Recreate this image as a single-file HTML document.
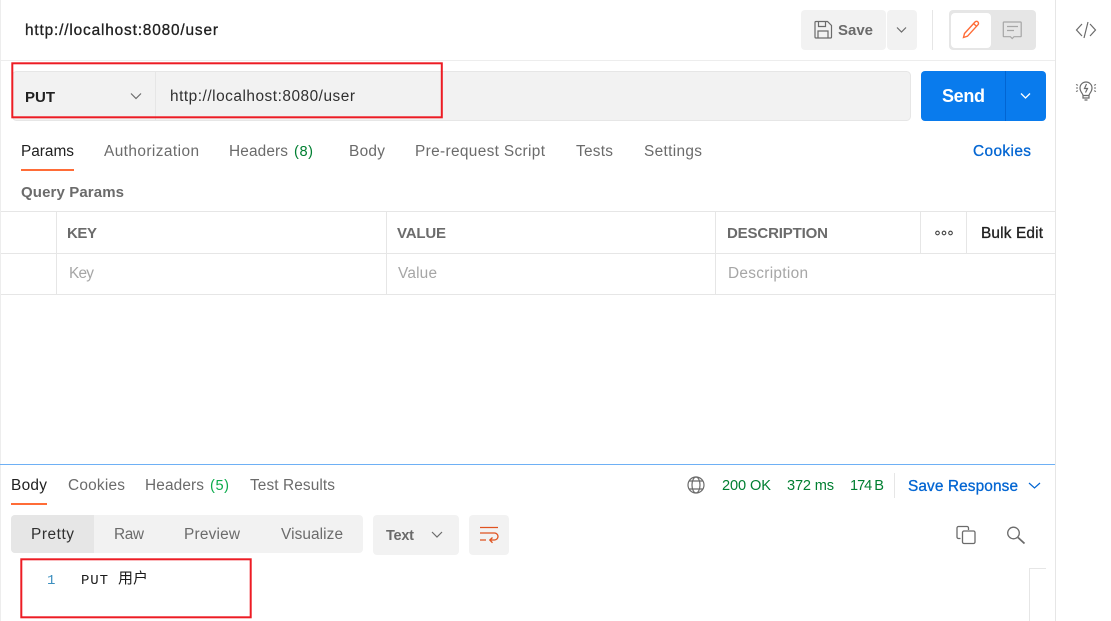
<!DOCTYPE html>
<html lang="en"><head><meta charset="utf-8"><title>Request</title>
<style>
html,body{margin:0;padding:0;background:#fff;width:1111px;height:621px;overflow:hidden}
svg{display:block}
text{font-family:"Liberation Sans","Noto Sans CJK SC",sans-serif;font-size:15.4px;fill:#6b6b6b}
.d{fill:#212121}
.m{stroke:currentColor;stroke-width:.3}
.g{fill:#007f31;font-size:14.6px}
.b{font-weight:bold;font-size:15px}
.p{fill:#a6a6a6}
.ic{fill:none;stroke:#6b6b6b;stroke-width:1.2}
</style></head><body>
<svg width="1111" height="621" viewBox="0 0 1111 621" xmlns="http://www.w3.org/2000/svg">
<rect width="1111" height="621" fill="#fff"/>
<rect x="0" y="0" width="1" height="621" fill="#ededed"/>
<rect x="1055" y="0" width="1" height="621" fill="#e6e6e6"/>
<rect x="0" y="60" width="1055" height="1" fill="#ededed"/>

<text x="25" y="35" textLength="193" class="d m" style="color:#212121">http://localhost:8080/user</text>

<rect x="801" y="10" width="85" height="40" rx="4" fill="#f2f2f2"/>
<rect x="887" y="10" width="30" height="40" rx="4" fill="#f2f2f2"/>
<path d="M815 22.500a1 1 0 0 1 1-1h11.500l4 4v11.500a1 1 0 0 1-1 1h-14.500a1 1 0 0 1-1-1zM818.500 21.500v5h7v-5M818 37.500v-6.500h10v6.500" class="ic"/>
<text x="838" y="35" textLength="35" class="b">Save</text>
<path d="M897 27.500l4.500 4.500 4.500-4.500" class="ic"/>
<rect x="932" y="10" width="1" height="40" fill="#e6e6e6"/>
<rect x="949" y="10" width="87" height="40" rx="4" fill="#e6e6e6"/>
<rect x="951" y="13" width="40" height="35" rx="4" fill="#fff"/>
<path d="M963.500 37.500l1-4 10.500-11.500a1.800 1.800 0 0 1 3 2.700l-10.500 11.500zM973.500 23.500l3 2.800" fill="none" stroke="#ff6c37" stroke-width="1.400"/>
<path d="M1004 22h16.500a.7.700 0 0 1 .7.700v13.300a.7.700 0 0 1-.7.700h-6.500l-1.800 1.800-1.800-1.800h-6.400a.7.700 0 0 1-.7-.7v-13.300a.7.700 0 0 1 .7-.7zM1007 26.500h11M1007 30.500h7" fill="none" stroke="#a6a6a6" stroke-width="1.200"/>

<rect x="12.500" y="71.500" width="898" height="49" rx="4" fill="#f2f2f2" stroke="#e6e6e6"/>
<rect x="155" y="72" width="1" height="48" fill="#e6e6e6"/>
<text x="25" y="102" textLength="30" class="d b">PUT</text>
<path d="M131 93.500l5 5 5-5" class="ic"/>
<text x="170" y="101" textLength="185" class="d" style="fill:#303030">http://localhost:8080/user</text>
<rect x="921" y="71" width="125" height="50" rx="4" fill="#097bed"/>
<rect x="1005" y="71" width="1" height="50" fill="#0265d2"/>
<text x="942" y="102" textLength="43" class="b" style="fill:#fff;font-size:18px">Send</text>
<path d="M1021 93.500l4.500 4.500 4.500-4.500" fill="none" stroke="#fff" stroke-width="1.300"/>

<text x="21" y="156" textLength="53" class="d">Params</text>
<rect x="21" y="169" width="53" height="2" fill="#ff6c37"/>
<text x="104" y="156" textLength="95">Authorization</text>
<text x="229" y="156" textLength="59">Headers</text>
<text x="294" y="156" textLength="19" class="g">(8)</text>
<text x="349" y="156" textLength="36">Body</text>
<text x="415" y="156" textLength="130">Pre-request Script</text>
<text x="576" y="156" textLength="37">Tests</text>
<text x="644" y="156" textLength="58">Settings</text>
<text x="973" y="156" textLength="58" class="m" style="fill:#0265d2;color:#0265d2">Cookies</text>
<text x="21" y="197" textLength="103" class="b">Query Params</text>

<rect x="1" y="211" width="1054" height="1" fill="#e6e6e6"/>
<rect x="1" y="253" width="1054" height="1" fill="#e6e6e6"/>
<rect x="1" y="294" width="1054" height="1" fill="#e6e6e6"/>
<rect x="56" y="212" width="1" height="82" fill="#e6e6e6"/>
<rect x="386" y="212" width="1" height="82" fill="#e6e6e6"/>
<rect x="715" y="212" width="1" height="82" fill="#e6e6e6"/>
<rect x="920" y="212" width="1" height="41" fill="#e6e6e6"/>
<rect x="966" y="212" width="1" height="41" fill="#e6e6e6"/>
<text x="67" y="238" textLength="30" class="b">KEY</text>
<text x="397" y="238" textLength="49" class="b">VALUE</text>
<text x="727" y="238" textLength="101" class="b">DESCRIPTION</text>
<g fill="none" stroke="#404040" stroke-width="1.100"><circle cx="937.500" cy="233" r="1.800"/><circle cx="944" cy="233" r="1.800"/><circle cx="950.500" cy="233" r="1.800"/></g>
<text x="981" y="238" textLength="62" class="d m" style="color:#212121">Bulk Edit</text>
<text x="69" y="278" textLength="25" class="p">Key</text>
<text x="398" y="278" textLength="39" class="p">Value</text>
<text x="728" y="278" textLength="80" class="p">Description</text>

<rect x="0" y="464" width="1055" height="1" fill="#6eb0f5"/>
<text x="11" y="490" textLength="36" class="d">Body</text>
<rect x="11" y="503" width="36" height="2" fill="#ff6c37"/>
<text x="68" y="490" textLength="57">Cookies</text>
<text x="145" y="490" textLength="59">Headers</text>
<text x="210" y="490" textLength="19" class="g" style="fill:#0cab4c">(5)</text>
<text x="250" y="490" textLength="85">Test Results</text>

<g fill="none" stroke="#6b6b6b" stroke-width="1.200"><circle cx="696" cy="485" r="8"/><ellipse cx="696" cy="485" rx="4" ry="8"/><path d="M689 481h14M689 489h14"/></g>
<text x="722" y="490" textLength="49" class="g">200 OK</text>
<text x="787" y="490" textLength="47" class="g">372 ms</text>
<text x="850" y="490" textLength="34" class="g">174 B</text>
<rect x="894" y="473" width="1" height="25" fill="#e6e6e6"/>
<text x="908" y="491" textLength="110" class="m" style="fill:#0265d2;color:#0265d2">Save Response</text>
<path d="M1029 483l5.500 5 5.500-5" fill="none" stroke="#0265d2" stroke-width="1.200"/>

<rect x="11" y="515" width="352" height="38" rx="4" fill="#f2f2f2"/>
<path d="M15 515h79v38h-79a4 4 0 0 1-4-4v-30a4 4 0 0 1 4-4z" fill="#e6e6e6"/>
<text x="31" y="539" textLength="43" class="d" style="fill:#303030">Pretty</text>
<text x="114" y="539" textLength="30">Raw</text>
<text x="184" y="539" textLength="56">Preview</text>
<text x="281" y="539" textLength="62">Visualize</text>
<rect x="373" y="515" width="86" height="40" rx="4" fill="#f2f2f2"/>
<text x="386" y="540" textLength="28" class="b" style="font-size:14.5px">Text</text>
<path d="M432 532l5 5 5-5" class="ic"/>
<rect x="469" y="515" width="40" height="40" rx="4" fill="#f2f2f2"/>
<path d="M480 527.500h18M480 533h14.500a3.300 3.300 0 0 1 0 7h-4.500M492.500 537.500l-2.700 2.500 2.700 2.800M480 540h6" fill="none" stroke="#e05320" stroke-width="1.300"/>

<path d="M960.500 538.500h-2a1.500 1.500 0 0 1-1.500-1.500v-9a1.500 1.500 0 0 1 1.500-1.500h8.500a1.500 1.500 0 0 1 1.500 1.500v2" fill="none" stroke="#6b6b6b" stroke-width="1.300"/>
<rect x="962.500" y="531" width="12.500" height="12.500" rx="1.500" fill="none" stroke="#6b6b6b" stroke-width="1.300"/>
<circle cx="1013.500" cy="533" r="5.800" fill="none" stroke="#6b6b6b" stroke-width="1.300"/>
<path d="M1018 537.500l6.500 6" fill="none" stroke="#6b6b6b" stroke-width="1.800"/>

<text x="47" y="584" textLength="8" style="font-family:'Liberation Mono',monospace;font-size:14px;fill:#3b8fbf">1</text>
<text x="81" y="584" textLength="27" style="font-family:'Liberation Mono',monospace;font-size:14px;fill:#1a1a1a">PUT</text>
<text x="118" y="583" style="font-family:'Noto Sans CJK SC','WenQuanYi Zen Hei',sans-serif;font-size:15px;fill:#1a1a1a">用户</text>

<path d="M1046 568.500h-16.500v53" fill="none" stroke="#e6e6e6"/>

<path d="M1082 24l-5.500 6 5.500 6M1090 24l5.500 6-5.500 6M1088 22l-4 16" fill="none" stroke="#6b6b6b" stroke-width="1.200"/>
<path d="M1083 95.500c0-2-3-3.500-3-7.500a6 6 0 0 1 12 0c0 4-3 5.500-3 7.500zM1083 95.500v2.500h6v-2.500M1084.500 100h3M1086.500 84l-2 4.500h3l-2 4" fill="none" stroke="#6b6b6b" stroke-width="1.200"/>
<path d="M1076 84.500l2 .8M1076 88h2M1076 91.500l2-.8M1096 84.500l-2 .8M1096 88h-2M1096 91.500l-2-.8" fill="none" stroke="#6b6b6b" stroke-width="1"/>

<rect x="12.300" y="63.300" width="429.500" height="54" fill="none" stroke="#ed1c24" stroke-width="2"/>
<rect x="21.300" y="559.300" width="229.400" height="58" fill="none" stroke="#ed1c24" stroke-width="2"/>
</svg>
</body></html>
